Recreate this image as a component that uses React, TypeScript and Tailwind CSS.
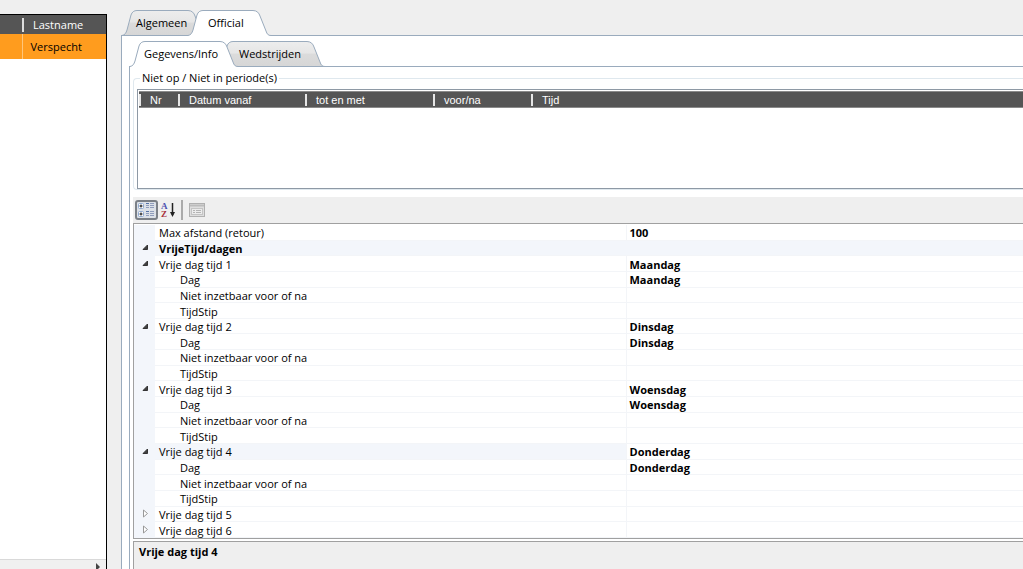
import { clsx } from 'clsx';

interface PropertyRow {
  label: string;
  value?: string;
  kind: 'plain' | 'category' | 'parent' | 'child' | 'collapsed';
  selected?: boolean;
}

const freeDay = (nr: number, day: string, selected = false): PropertyRow[] => [
  { label: `Vrije dag tijd ${nr}`, value: day, kind: 'parent', selected },
  { label: 'Dag', value: day, kind: 'child' },
  { label: 'Niet inzetbaar voor of na', kind: 'child' },
  { label: 'TijdStip', kind: 'child' },
];

const PROPERTIES: PropertyRow[] = [
  { label: 'Max afstand (retour)', value: '100', kind: 'plain' },
  { label: 'VrijeTijd/dagen', kind: 'category' },
  ...freeDay(1, 'Maandag'),
  ...freeDay(2, 'Dinsdag'),
  ...freeDay(3, 'Woensdag'),
  ...freeDay(4, 'Donderdag', true),
  { label: 'Vrije dag tijd 5', kind: 'collapsed' },
  { label: 'Vrije dag tijd 6', kind: 'collapsed' },
];

const PERIOD_COLUMNS = [
  { label: 'Nr', width: 'w-[39px]' },
  { label: 'Datum vanaf', width: 'w-[127px]' },
  { label: 'tot en met', width: 'w-[128px]' },
  { label: 'voor/na', width: 'w-[98px]' },
  { label: 'Tijd', width: '' },
];

interface TabProps {
  label: string;
  width: number;
  active?: boolean;
  className: string;
}

function Tab({ label, width, active = false, className }: TabProps) {
  const outline = `M0 25.5 C3 25 4 23 5 20 L9 5 C10 2 12 0.5 15 0.5 H${width - 18} C${width - 14} 0.5 ${width - 12} 3 ${width - 11} 6 L${width - 5} 21 C${width - 4} 24 ${width - 3} 25.5 ${width} 25.5`;
  return (
    <button
      type="button"
      role="tab"
      aria-selected={active}
      className={clsx('relative h-[26px] shrink-0 text-left', active && 'z-10', className)}
    >
      <svg className="absolute inset-0" width={width} height="26" aria-hidden="true">
        <defs>
          <linearGradient id={`tab-${width}`} x1="0" y1="0" x2="0" y2="1">
            <stop offset="0" stopColor="#ededed" />
            <stop offset="0.45" stopColor="#e6e6e6" />
            <stop offset="0.5" stopColor="#dbdbdb" />
            <stop offset="1" stopColor="#d6d6d6" />
          </linearGradient>
        </defs>
        <path d={`${outline} V26 H0 Z`} fill={active ? '#fff' : `url(#tab-${width})`} />
        <path d={outline} fill="none" stroke="#9aabbd" />
        {!active && <path d={`M0 25.5 H${width}`} stroke="#9aabbd" />}
      </svg>
      <span className="relative">{label}</span>
    </button>
  );
}

function ContactList() {
  return (
    <aside className="flex w-[107px] shrink-0 flex-col border-t border-r border-black bg-white">
      <table className="w-full table-fixed border-collapse text-left">
        <thead>
          <tr className="h-[19px] bg-[#555] text-white">
            <th className="w-[22px]" aria-label="Firstname" />
            <th className="font-normal">
              <span className="block border-l-2 border-[#ddd] pl-[9px] leading-[14px]">Lastname</span>
            </th>
          </tr>
        </thead>
        <tbody>
          <tr className="h-[25px] bg-[#ff9c1e]">
            <td />
            <td className="border-l border-[#ffc67a] pt-px pl-2">Verspecht</td>
          </tr>
        </tbody>
      </table>
      <div className="mt-auto flex h-[10px] justify-end overflow-hidden border-t border-[#d9d9d9] bg-[#f0f0f0]">
        <button type="button" aria-label="Scroll right" className="w-[14px]">
          <svg width="10" height="9" aria-hidden="true">
            <path d="M4 3 L8 7 L4 11 Z" fill="#444" />
          </svg>
        </button>
      </div>
    </aside>
  );
}

function PeriodList() {
  return (
    <fieldset className="min-w-0 rounded-l border border-r-0 border-[#dfe8ee] pl-[3px]">
      <legend className="ml-[3px] px-[2px] leading-[16px]">Niet op / Niet in periode(s)</legend>
      <div className="mt-[3px] h-[100px] border border-r-0 border-[#8e99a5] bg-white pt-px pl-px">
        <table className="w-full table-fixed border-collapse text-left">
          <thead>
            <tr className="h-4 border-t border-b border-[#8a8a8a] bg-[#555] font-['Liberation_Sans',sans-serif] text-[11px] text-white">
              {PERIOD_COLUMNS.map((column) => (
                <th key={column.label} className={clsx('p-0 font-normal', column.width)}>
                  <span className="block border-l-2 border-[#e6e6e6] pl-[9px] leading-[12px]">
                    {column.label}
                  </span>
                </th>
              ))}
            </tr>
          </thead>
        </table>
      </div>
    </fieldset>
  );
}

function GridToolbar() {
  return (
    <div role="toolbar" className="mt-[7px] flex h-[26px] items-center bg-[#efefef] pl-[2px]">
      <button
        type="button"
        aria-label="Categorized"
        className="flex h-[20px] w-[23px] items-center justify-center rounded-[3px] border-2 border-[#7b8087] bg-[#dce1e8]"
      >
        <svg width="19" height="16" fill="none" aria-hidden="true">
          <rect x="1.5" y="1.5" width="5" height="5" rx="1" fill="#fff" stroke="#8fa9d0" />
          <rect x="1.5" y="9.5" width="5" height="5" rx="1" fill="#fff" stroke="#8fa9d0" />
          <path d="M2.5 4h3M4 2.5v3M2.5 12h3M4 10.5v3" stroke="#111" />
          <path d="M9 1.5h3M9 9.5h3" stroke="#5472a8" />
          <path
            d="M9 3.5h3M13 3.5h4M9 5.5h3M13 5.5h4M9 11.5h3M13 11.5h4M9 13.5h3M13 13.5h4M13 1.5h4M13 9.5h4"
            stroke="#8f9dbc"
          />
        </svg>
      </button>
      <button type="button" aria-label="Alphabetical" className="ml-[2px] h-[18px] w-[16px]">
        <svg width="16" height="18" fill="none" aria-hidden="true">
          <text x="1" y="8" fontSize="9" fontWeight="bold" fontFamily="Liberation Serif, serif" fill="#4a4fb0">A</text>
          <text x="1" y="16" fontSize="9" fontWeight="bold" fontFamily="Liberation Serif, serif" fill="#a8323c">Z</text>
          <path d="M12.5 2v12" stroke="#222" strokeWidth="1.5" />
          <path d="M10 11h5l-2.5 5Z" fill="#222" />
        </svg>
      </button>
      <span className="mx-[5px] h-[20px] w-[2px] bg-[#aaa]" />
      <button type="button" disabled aria-label="Property pages" className="ml-px h-[15px] w-[16px]">
        <svg width="16" height="15" fill="none" aria-hidden="true">
          <rect x="0.5" y="0.5" width="15" height="13" fill="#dedede" stroke="#b0b0b0" />
          <path d="M1 2.5h14" stroke="#bcbcbc" strokeWidth="2" />
          <rect x="2.5" y="5.5" width="11" height="6" fill="#ececec" stroke="#c4c4c4" />
          <path d="M4 7.5h2M7 7.5h5M4 9.5h2M7 9.5h5" stroke="#b4b4b4" />
        </svg>
      </button>
    </div>
  );
}

function Twisty({ open }: { open: boolean }) {
  return (
    <button type="button" aria-expanded={open} aria-label="Toggle" className="block h-[11px] w-full">
      <svg className="mx-auto" width="8" height="11" fill="none" aria-hidden="true">
        {open ? (
          <path d="M6.5 3 V7.5 H2 Z" fill="#404040" stroke="#333" />
        ) : (
          <path d="M2.5 2 L6.5 5.5 L2.5 9 Z" fill="#fff" stroke="#999" />
        )}
      </svg>
    </button>
  );
}

function PropertyGrid() {
  return (
    <div className="border border-r-0 border-[#a0a0a0] bg-white pt-px">
      <table className="h-[313px] w-full table-fixed border-collapse text-left leading-[12px]">
        <colgroup>
          <col className="w-[21px]" />
          <col className="w-[471px]" />
          <col />
        </colgroup>
        <tbody>
          {PROPERTIES.map((row, index) => (
            <tr key={index} className={clsx(row.kind === 'category' && 'bg-[#f3f6fb]')}>
              <td className="bg-[#f3f6fb] p-0">
                {row.kind !== 'plain' && row.kind !== 'child' && <Twisty open={row.kind !== 'collapsed'} />}
              </td>
              <th
                scope="row"
                className={clsx(
                  'border-b border-[#f3f5f8] pt-[2px] pb-0',
                  row.kind === 'child' ? 'pl-[25px]' : 'pl-1',
                  row.kind === 'category' ? 'font-bold' : 'border-r font-normal',
                  row.selected && 'bg-[#f3f6fb]',
                )}
              >
                {row.label}
              </th>
              <td className="border-b border-[#f3f5f8] pt-[2px] pb-0 pl-[3px] font-bold">{row.value}</td>
            </tr>
          ))}
        </tbody>
      </table>
    </div>
  );
}

export default function App() {
  return (
    <div className="flex h-screen overflow-hidden bg-[#efefef] font-['Open_Sans',sans-serif] text-[11px] text-black">
      <div className="flex pt-[14px]">
        <ContactList />
      </div>

      <main className="ml-[14px] flex min-w-0 flex-1 flex-col pt-[10px]">
        <div role="tablist" className="-mb-px flex pl-px">
          <Tab label="Algemeen" width={84} className="w-[66px] pl-[14px]" />
          <Tab label="Official" width={83} active className="w-[83px] pl-[20px]" />
        </div>

        <div className="flex flex-1 flex-col border-t border-l border-[#9aabbd] bg-white pt-[5px] pl-[7px]">
          <div role="tablist" className="-mb-px flex pl-px">
            <Tab label="Gegevens/Info" width={108} active className="w-[88px] pl-[14px]" />
            <Tab label="Wedstrijden" width={107} className="w-[107px] pl-[21px]" />
          </div>

          <div className="flex flex-1 flex-col border-t border-l border-[#9aabbd] bg-white pt-[3px] pl-[3px]">
            <PeriodList />
            <GridToolbar />
            <PropertyGrid />
            <section className="mt-[2px] flex-1 border-t border-l border-[#a0a0a0] bg-[#efefef] px-[5px] pt-[2px]">
              <h2 className="leading-[16px] font-bold">Vrije dag tijd 4</h2>
            </section>
          </div>
        </div>
      </main>
    </div>
  );
}
